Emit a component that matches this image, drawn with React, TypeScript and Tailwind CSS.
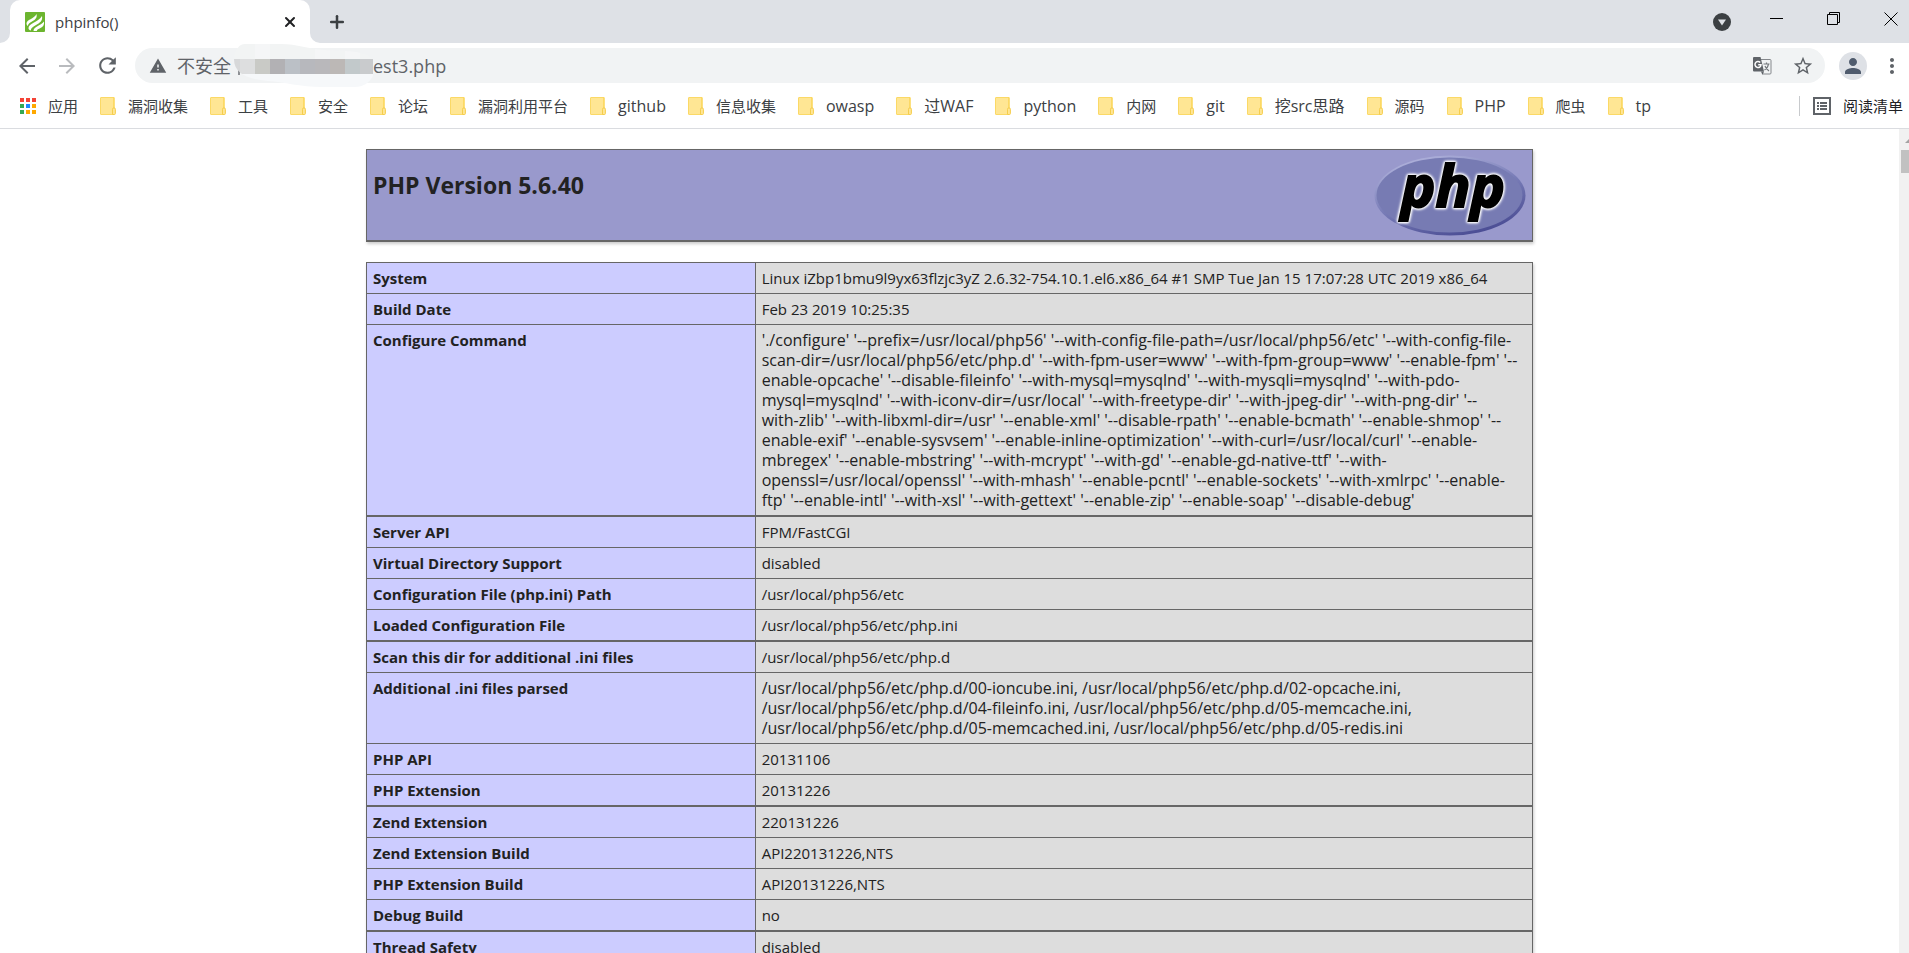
import { Fragment } from "react";
import { Plus, X } from "lucide-react";
import { MdArrowBack, MdArrowForward, MdMoreVert, MdPerson, MdRefresh, MdStarBorder, MdWarning } from "react-icons/md";

const bookmarks = [
  "漏洞收集",
  "工具",
  "安全",
  "论坛",
  "漏洞利用平台",
  "github",
  "信息收集",
  "owasp",
  "过WAF",
  "python",
  "内网",
  "git",
  "挖src思路",
  "源码",
  "PHP",
  "爬虫",
  "tp",
];

const rows: { name: string; value: string[]; thick?: boolean }[] = [
  {
    name: "System",
    value: ["Linux iZbp1bmu9l9yx63flzjc3yZ 2.6.32-754.10.1.el6.x86_64 #1 SMP Tue Jan 15 17:07:28 UTC 2019 x86_64"],
  },
  { name: "Build Date", value: ["Feb 23 2019 10:25:35"] },
  {
    name: "Configure Command",
    value: [
      "'./configure' '--prefix=/usr/local/php56' '--with-config-file-path=/usr/local/php56/etc' '--with-config-file-",
      "scan-dir=/usr/local/php56/etc/php.d' '--with-fpm-user=www' '--with-fpm-group=www' '--enable-fpm' '--",
      "enable-opcache' '--disable-fileinfo' '--with-mysql=mysqlnd' '--with-mysqli=mysqlnd' '--with-pdo-",
      "mysql=mysqlnd' '--with-iconv-dir=/usr/local' '--with-freetype-dir' '--with-jpeg-dir' '--with-png-dir' '--",
      "with-zlib' '--with-libxml-dir=/usr' '--enable-xml' '--disable-rpath' '--enable-bcmath' '--enable-shmop' '--",
      "enable-exif' '--enable-sysvsem' '--enable-inline-optimization' '--with-curl=/usr/local/curl' '--enable-",
      "mbregex' '--enable-mbstring' '--with-mcrypt' '--with-gd' '--enable-gd-native-ttf' '--with-",
      "openssl=/usr/local/openssl' '--with-mhash' '--enable-pcntl' '--enable-sockets' '--with-xmlrpc' '--enable-",
      "ftp' '--enable-intl' '--with-xsl' '--with-gettext' '--enable-zip' '--enable-soap' '--disable-debug'",
    ],
    thick: true,
  },
  { name: "Server API", value: ["FPM/FastCGI"] },
  { name: "Virtual Directory Support", value: ["disabled"] },
  { name: "Configuration File (php.ini) Path", value: ["/usr/local/php56/etc"] },
  { name: "Loaded Configuration File", value: ["/usr/local/php56/etc/php.ini"], thick: true },
  { name: "Scan this dir for additional .ini files", value: ["/usr/local/php56/etc/php.d"] },
  {
    name: "Additional .ini files parsed",
    value: [
      "/usr/local/php56/etc/php.d/00-ioncube.ini, /usr/local/php56/etc/php.d/02-opcache.ini,",
      "/usr/local/php56/etc/php.d/04-fileinfo.ini, /usr/local/php56/etc/php.d/05-memcache.ini,",
      "/usr/local/php56/etc/php.d/05-memcached.ini, /usr/local/php56/etc/php.d/05-redis.ini",
    ],
  },
  { name: "PHP API", value: ["20131106"] },
  { name: "PHP Extension", value: ["20131226"], thick: true },
  { name: "Zend Extension", value: ["220131226"] },
  { name: "Zend Extension Build", value: ["API220131226,NTS"] },
  { name: "PHP Extension Build", value: ["API20131226,NTS"] },
  { name: "Debug Build", value: ["no"], thick: true },
  { name: "Thread Safety", value: ["disabled"] },
];

export default function App() {
  return (
    <div className="flex h-screen flex-col overflow-hidden bg-white font-['Open_Sans','Noto_Sans_CJK_SC',sans-serif] text-[15px] text-[#3c4043]">
      <TabStrip />
      <Toolbar />
      <BookmarksBar />
      <div className="flex min-h-0 flex-1">
        <main className="flex-1 overflow-hidden pt-5 leading-5 text-[#222]">
          <PhpInfo />
        </main>
        <Scrollbar />
      </div>
    </div>
  );
}

function TabStrip() {
  return (
    <div className="flex h-[43px] shrink-0 bg-[#dee1e6]">
      <svg className="h-[10px] w-[10px] self-end" viewBox="0 0 10 10">
        <path d="M10 0v10H0A10 10 0 0 0 10 0z" fill="#fff" />
      </svg>
      <div className="flex w-[300px] items-center rounded-t-[10px] bg-white pr-3 pl-[15px]">
        <Favicon />
        <span className="ml-[10px] flex-1 leading-5">phpinfo()</span>
        <button aria-label="关闭标签页" className="text-[#202124]">
          <X size={16} strokeWidth={3} />
        </button>
      </div>
      <svg className="h-[10px] w-[10px] self-end" viewBox="0 0 10 10">
        <path d="M0 0v10h10A10 10 0 0 1 0 0z" fill="#fff" />
      </svg>
      <button aria-label="新标签页" className="ml-[7px] text-[#3c4043]">
        <Plus size={20} strokeWidth={3} />
      </button>
      <div className="ml-auto flex items-start pr-[11px]">
        <button aria-label="搜索标签页" className="mt-[13px] mr-[39px]">
          <svg width="18" height="18" viewBox="0 0 18 18" className="block">
            <circle cx="9" cy="9" r="9" fill="#3c4043" />
            <path d="M5 6.500h8L9 12.500z" fill="#dee1e6" />
          </svg>
        </button>
        <button aria-label="最小化" className="mt-3 mr-[43px]">
          <svg width="14" height="14" viewBox="0 0 14 14" className="block">
            <path d="M0 6.500h13" stroke="#000" />
          </svg>
        </button>
        <button aria-label="还原" className="mt-3 mr-[43px]">
          <svg width="14" height="14" viewBox="0 0 14 14" fill="none" stroke="#000" className="block">
            <path d="M.5 2.500h10v10H.5zM2.500 2.500v-2h10v10h-2" />
          </svg>
        </button>
        <button aria-label="关闭" className="mt-3">
          <svg width="14" height="14" viewBox="0 0 14 14" fill="none" stroke="#000" className="block">
            <path d="M.5.5l13 13M13.500.5l-13 13" />
          </svg>
        </button>
      </div>
    </div>
  );
}

function Toolbar() {
  return (
    <div className="flex h-[45px] shrink-0 items-center pr-[5px] pl-[15px] text-[#5f6368]">
      <button aria-label="后退">
        <MdArrowBack size={24} />
      </button>
      <button aria-label="前进" className="ml-4 text-[#b9bbbe]">
        <MdArrowForward size={24} />
      </button>
      <button aria-label="重新加载" className="ml-4">
        <MdRefresh size={25} />
      </button>
      <div className="ml-[15px] flex h-[35px] flex-1 items-center rounded-full bg-[#f1f3f4] pr-[11px] pl-[14px] text-[18px] leading-6">
        <MdWarning size={18} />
        <span className="ml-[10px]">不安全</span>
        <RedactedHost />
        <span>est3.php</span>
        <button aria-label="翻译此网页" className="ml-auto">
          <TranslateIcon />
        </button>
        <button aria-label="为此标签页添加书签" className="ml-5">
          <MdStarBorder size={22} />
        </button>
      </div>
      <button aria-label="个人资料" className="ml-[14px] flex h-7 w-7 items-center justify-center rounded-full bg-[#dee1e6] text-[#4f5b6d]">
        <MdPerson size={24} />
      </button>
      <button aria-label="更多" className="ml-[13px]">
        <MdMoreVert size={24} />
      </button>
    </div>
  );
}

function BookmarksBar() {
  return (
    <nav className="flex h-[41px] shrink-0 items-center border-b border-[#dadce0] pr-[6px] pb-1 pl-5">
      <a href="#" className="flex items-center">
        <AppsIcon />
        <span className="ml-3">应用</span>
      </a>
      {bookmarks.map((label) => (
        <a key={label} href="#" className="ml-[22px] flex items-center whitespace-nowrap">
          <FolderIcon />
          <span className={`ml-3 leading-6 ${/[a-z]/i.test(label) ? "text-[16px]" : ""}`}>{label}</span>
        </a>
      ))}
      <div className="ml-auto h-5 w-px bg-[#c8cacd]" />
      <a href="#" className="ml-[13px] flex items-center text-[#202124]">
        <svg width="18" height="18" viewBox="0 0 18 18">
          <path d="M1 1h16v16H1z" fill="none" stroke="#5f6368" strokeWidth="2" />
          <path d="M4 5h2v2H4zM7 5h7v2H7zM4 8h2v2H4zM7 8h7v2H7zM4 11h2v2H4zM7 11h7v2H7z" fill="#5f6368" />
        </svg>
        <span className="ml-3">阅读清单</span>
      </a>
    </nav>
  );
}

function PhpInfo() {
  return (
    <div className="mx-auto w-[1167px] max-w-full">
      <header className="flex h-[93px] items-start justify-between border border-b-2 border-[#666] bg-[#9999cc] pt-[5px] pr-[6px] pl-[6px] shadow-[1px_2px_3px_#ccc]">
        <h1 className="mt-[15px] text-[23px] leading-[30px] font-bold">PHP Version 5.6.40</h1>
        <PhpLogo />
      </header>

      <table className="mt-5 w-full border-collapse shadow-[1px_2px_3px_#ccc]">
        <tbody>
          {rows.map((row) => (
            <tr key={row.name}>
              <th
                scope="row"
                className={`w-1/3 border border-[#666] bg-[#ccccff] px-[6px] py-[5px] text-left align-top font-bold ${row.thick ? "border-b-2" : ""}`}
              >
                {row.name}
              </th>
              <td
                className={`border border-[#666] bg-[#dddddd] px-[6px] py-[5px] align-top whitespace-nowrap ${row.thick ? "border-b-2" : ""} ${row.value.length > 1 ? "text-[16px]" : ""}`}
              >
                {row.value.map((line, i) => (
                  <Fragment key={line}>
                    {i > 0 && <br />}
                    {line}
                  </Fragment>
                ))}
              </td>
            </tr>
          ))}
        </tbody>
      </table>
    </div>
  );
}

function Scrollbar() {
  return (
    <div className="w-[10px] shrink-0 overflow-hidden bg-[#f1f1f1]">
      <svg width="17" height="21" viewBox="0 0 17 21" className="block">
        <path d="M6 14l4-4 4 4z" fill="#a3a3a3" />
      </svg>
      <div className="ml-[2px] h-[23px] bg-[#c1c1c1]" />
    </div>
  );
}

function Favicon() {
  return (
    <svg width="20" height="20" viewBox="0 0 20 20">
      <rect width="20" height="20" rx="1" fill="#6cb52f" />
      <path d="M1.500 11.500C1.500 7.500 9 7 11.500 2c1 4-1.500 5.800-4.500 7.500-2.500 1.400-4 2.500-4.200 4.500C2 13.300 1.500 12.500 1.500 11.500z" fill="#fff" />
      <path d="M3.500 16.500C3 11.500 13 10.500 17 4c1 5-2.500 7-6 9-3 1.700-5 3-5.300 5.500-1-.3-2-1-2.200-2z" fill="#fff" />
      <path d="M8.500 19c0-4.500 7-5 10.500-9.500.5 4-1.500 5.500-3.500 6.500-2 1-3.500 1.500-3.700 3z" fill="#fff" />
    </svg>
  );
}

function AppsIcon() {
  return (
    <svg width="16" height="16" viewBox="0 0 16 16">
      <path d="M0 0h4v4H0zM6 0h4v4H6zM12 0h4v4h-4z" fill="#f44336" />
      <path d="M0 6h4v4H0zM0 12h4v4H0z" fill="#34a853" />
      <path d="M6 6h4v4H6z" fill="#1e88ff" />
      <path d="M12 6h4v4h-4zM6 12h4v4H6zM12 12h4v4h-4z" fill="#ffa800" />
    </svg>
  );
}

function FolderIcon() {
  return (
    <svg width="16" height="18" viewBox="0 0 16 18">
      <path d="M1 .5h13v17H1a.5.5 0 0 1-.5-.5V1A.5.5 0 0 1 1 .5z" fill="#ffe694" stroke="#fbd966" />
      <path d="M14 .5v10.500" stroke="#fbd34f" />
      <path d="M12.500 17.500v-5.200a1.400 1.400 0 0 1 2.900 0v4.200a1 1 0 0 1-1 1z" fill="#ffe694" stroke="#f5cd4c" />
    </svg>
  );
}

function TranslateIcon() {
  return (
    <svg width="20" height="20" viewBox="0 0 20 20" fill="none">
      <path d="M8 3.500h10a1 1 0 0 1 1 1V17a1 1 0 0 1-1 1h-7" stroke="#85888c" />
      <path d="M11.500 8h6M14.500 6.500V8M16.500 8c-.5 3-2 5-4 6M13 10c1 2.500 2.500 4 4 5" stroke="#75797d" strokeWidth="1.200" />
      <path d="M2 1h6.500L12 15.500H2a1 1 0 0 1-1-1V2a1 1 0 0 1 1-1z" fill="#5f6368" />
      <path d="M9 15.500h3L10.500 19z" fill="#5f6368" />
      <path d="M8.200 6.500A3 3 0 1 0 9 8.700H6.200" stroke="#fff" strokeWidth="1.500" />
    </svg>
  );
}

// Host part of the address, pixelated
function RedactedHost() {
  return (
    <svg width="139" height="43" viewBox="0 0 139 43" className="ml-[3px] shrink-0">
      <clipPath id="blob">
        <path d="M0 15C1 6 5 0 11 0h36c16 0 28 5 44 6 20 1 38 0 48 9v17c-4 7-10 11-18 11H88C66 43 50 38 34 37 14 35 0 30 0 15z" />
      </clipPath>
      <path d="M4 25h2v6H4z" fill="#8d9094" />
      <g clipPath="url(#blob)">
        <path d="M0 0h139v15H0z" fill="#f2f4f4" />
        <path d="M21 0h15v15H21zM81 0h15v15H81zM111 0h15v15h-15z" fill="#f5f6f7" />
        <path d="M0 30h139v13H0z" fill="#f6f8fa" />
        <path d="M0 15h6v15H0z" fill="#d7d8d9" />
        <path d="M6 15h15v15H6z" fill="#dddedf" />
        <path d="M21 15h15v15H21z" fill="#c9cac6" />
        <path d="M36 15h15v15H36z" fill="#b2b1b4" />
        <path d="M51 15h15v15H51z" fill="#bbc0c6" />
        <path d="M66 15h15v15H66z" fill="#b7b8bd" />
        <path d="M81 15h15v15H81z" fill="#b9b8bb" />
        <path d="M96 15h15v15H96z" fill="#bcb8b6" />
        <path d="M111 15h15v15h-15z" fill="#c2c9cb" />
        <path d="M126 15h13v15h-13z" fill="#c9cbcd" />
      </g>
    </svg>
  );
}

function PhpLogo() {
  return (
    <svg width="152" height="81" viewBox="0 0 152 81" role="img" aria-label="PHP logo" className="shrink-0 overflow-visible">
      <defs>
        <linearGradient id="rim" x1="0.2" y1="0" x2="0.7" y2="1">
          <stop offset="0" stopColor="#b4b6de" />
          <stop offset="0.5" stopColor="#7a7eb8" />
          <stop offset="1" stopColor="#484a92" />
        </linearGradient>
      </defs>
      <ellipse cx="76" cy="40.500" rx="75.500" ry="40" fill="url(#rim)" />
      <ellipse cx="75.500" cy="40" rx="73" ry="37.500" fill="#777bb3" />
      <text
        x="79"
        y="52"
        textAnchor="middle"
        className="fill-black stroke-black text-[58px] font-bold italic [filter:drop-shadow(0_0_1px_white)_drop-shadow(0_0_1px_white)_drop-shadow(0_0_1px_white)]"
        strokeWidth="2"
      >
        php
      </text>
    </svg>
  );
}
